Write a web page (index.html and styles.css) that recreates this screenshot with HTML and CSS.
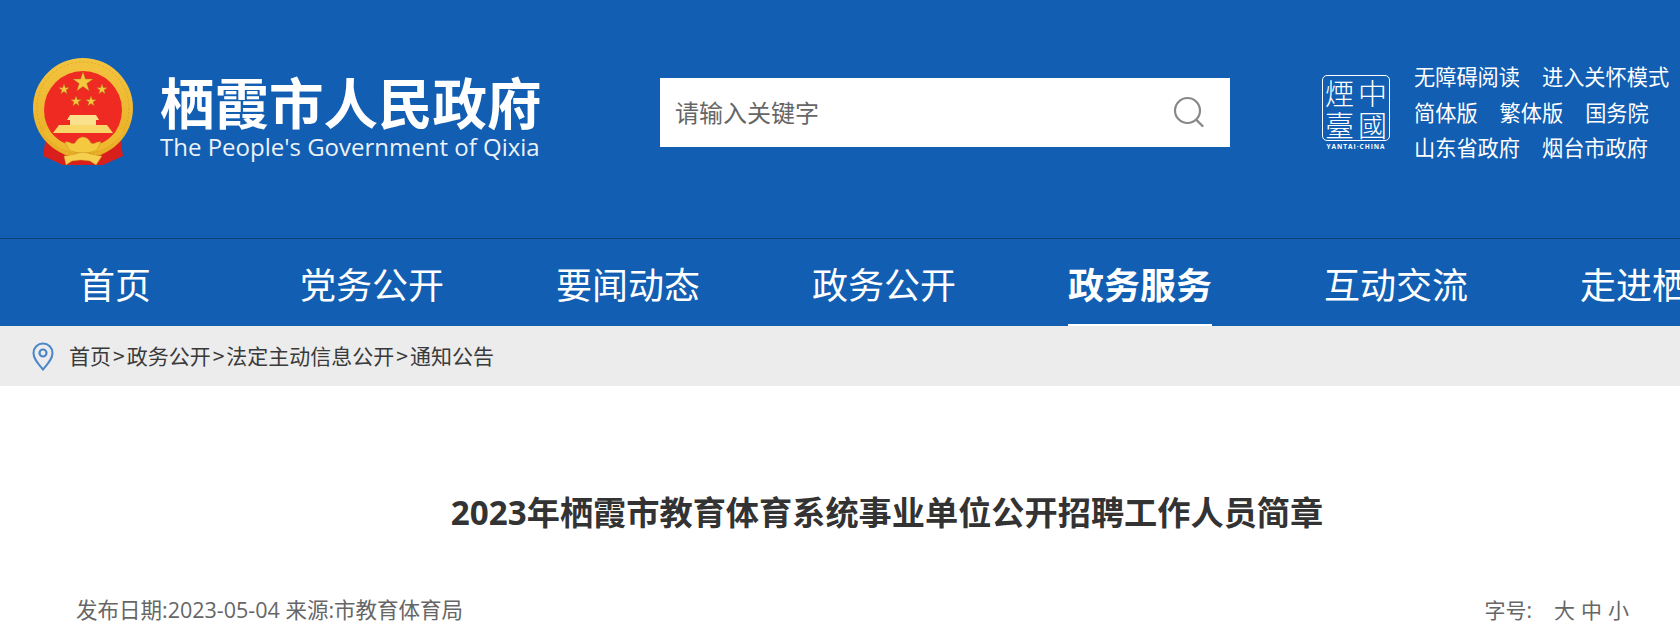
FILE: index.html
```html
<!DOCTYPE html>
<html lang="zh-CN">
<head>
<meta charset="utf-8">
<title>2023年栖霞市教育体育系统事业单位公开招聘工作人员简章</title>
<link rel="stylesheet" href="styles.css">
</head>
<body>
<header class="top">
  <a class="brand" href="#">
    <svg class="emblem" viewBox="0 0 102 108" aria-hidden="true">
      <defs>
        <linearGradient id="gold" x1="0" y1="0" x2="0" y2="1"><stop offset="0" stop-color="#f3c440"/><stop offset="1" stop-color="#e8ad24"/></linearGradient>
      </defs>
      <path d="M14 79L11 98l20 9 6-16z" fill="#d91f1c"/>
      <path d="M88 79l3 19-20 9-6-16z" fill="#d91f1c"/>
      <circle cx="51" cy="50" r="50" fill="url(#gold)"/>
      <circle cx="51" cy="50" r="46" fill="none" stroke="#d49a22" stroke-width="1" stroke-dasharray="2 2" opacity=".6"/>
      <circle cx="51" cy="52" r="39" fill="#ee2a22"/>
      <g fill="#f5c93f" stroke="#a8801c" stroke-width=".4">
        <polygon points="51,14 53.400,21.100 60.900,21.100 54.800,25.600 57.100,32.800 51,28.400 44.900,32.800 47.200,25.600 41.100,21.100 48.600,21.100"/>
        <polygon points="32,26 33.300,29.700 37.200,29.700 34,32.100 35.200,35.800 32,33.500 28.800,35.800 30,32.100 26.800,29.700 30.700,29.700"/>
        <polygon points="70,26 71.300,29.700 75.200,29.700 72,32.100 73.200,35.800 70,33.500 66.800,35.800 68,32.100 64.800,29.700 68.700,29.700"/>
        <polygon points="44,38 45.300,41.700 49.200,41.700 46,44.100 47.200,47.800 44,45.500 40.800,47.800 42,44.100 38.800,41.700 42.700,41.700"/>
        <polygon points="59,38 60.300,41.700 64.200,41.700 61,44.100 62.200,47.800 59,45.500 55.800,47.800 57,44.100 53.800,41.700 57.700,41.700"/>
      </g>
      <path d="M38 57h26l3 5h-3v5H38v-5h-3z" fill="#fbe08e"/>
      <path d="M27 67h48l6 8H21z" fill="#f8d768"/>
      <path d="M13 72c9 13 22 20 38 20s29-7 38-20" fill="none" stroke="#efb92f" stroke-width="6"/>
      <path d="M30 97h42v10H30z" fill="#d91f1c"/>
      <path d="M33 84c5-1 6 3 10 1 2-4 5-6 8-6s6 2 8 6c4 2 5-2 10-1l-4 8c-8 4-20 4-28 0z" fill="#f5c93f" stroke="#c38f1c" stroke-width=".5"/>
      <path d="M32 98l12-2c3-2 11-2 14 0l12 2-6 9-6-4-9-1-9 1-6 4z" fill="#f6cf4e" stroke="#c38f1c" stroke-width=".4"/>
    </svg>
    <span class="brand-text">
      <span class="brand-cn">栖霞市人民政府</span>
      <span class="brand-en">The People's Government of Qixia</span>
    </span>
  </a>
  <form class="search">
    <span class="search-hint">请输入关键字</span>
    <svg class="search-icon" viewBox="0 0 32 32" aria-hidden="true">
      <circle cx="14.500" cy="14.500" r="12.500" fill="none" stroke="#888" stroke-width="2.200"/>
      <path d="M23.500 24l6 6" stroke="#888" stroke-width="2.400" fill="none" stroke-linecap="round"/>
    </svg>
  </form>
  <div class="stamp">
    <div class="stamp-box">
      <span>煙</span><span>中</span><span>臺</span><span>國</span>
    </div>
    <div class="stamp-cap">YANTAI·CHINA</div>
  </div>
  <div class="links">
    <div class="links-row"><a href="#">无障碍阅读</a><a href="#">进入关怀模式</a></div>
    <div class="links-row"><a href="#">简体版</a><a href="#">繁体版</a><a href="#">国务院</a></div>
    <div class="links-row"><a href="#">山东省政府</a><a href="#">烟台市政府</a></div>
  </div>
</header>
<nav class="nav">
  <a class="nav-item nav-first" href="#">首页</a>
  <a class="nav-item" href="#">党务公开</a>
  <a class="nav-item" href="#">要闻动态</a>
  <a class="nav-item" href="#">政务公开</a>
  <a class="nav-item nav-active" href="#">政务服务</a>
  <a class="nav-item" href="#">互动交流</a>
  <a class="nav-item" href="#">走进栖霞</a>
</nav>
<div class="crumbs">
  <svg class="pin" viewBox="0 0 22 29" aria-hidden="true">
    <path d="M11 27.500C6 21.500 1.500 17 1.500 11a9.500 9.500 0 0 1 19 0c0 6-4.500 10.500-9.500 16.500z" fill="none" stroke="#4a86c8" stroke-width="2"/>
    <circle cx="11" cy="11" r="3.500" fill="none" stroke="#4a86c8" stroke-width="2.200"/>
  </svg>
  <span class="crumb-text"><a href="#">首页</a><span class="sep">&gt;</span><a href="#">政务公开</a><span class="sep">&gt;</span><a href="#">法定主动信息公开</a><span class="sep">&gt;</span><a href="#">通知公告</a></span>
</div>
<main class="article">
  <h1 class="title">2023年栖霞市教育体育系统事业单位公开招聘工作人员简章</h1>
  <div class="meta">
    <span class="meta-left">发布日期:2023-05-04 来源:市教育体育局</span>
    <span class="meta-right"><span class="size-label">字号:</span><a href="#">大</a><a href="#">中</a><a href="#">小</a></span>
  </div>
</main>
</body>
</html>
```

FILE: styles.css
```css
* { box-sizing: border-box; }
html, body { margin: 0; padding: 0; height: 635px; overflow: hidden; background: #fff; }
body { font-family: "Noto Sans CJK SC", "Liberation Sans", sans-serif; }
a { color: inherit; text-decoration: none; }

.top {
  height: 239px;
  background: #115eb2;
  border-bottom: 1px solid #0c3f75;
  display: flex;
  align-items: flex-start;
  padding: 58px 0 0 32px;
  color: #fff;
}
.brand { display: flex; width: 628px; flex: none; }
.emblem { width: 102px; height: 108px; flex: none; }
.brand-text { display: flex; flex-direction: column; margin-left: 26px; padding-top: 11px; width: 400px; }
.brand-cn { font-size: 54.500px; font-weight: 700; line-height: 64px; white-space: nowrap; }
.brand-en { font-family: "Open Sans", sans-serif; font-size: 24px; line-height: 24px; margin-top: 2px; white-space: nowrap; opacity: .92; }

.search {
  width: 570px;
  height: 69px;
  margin-top: 20px;
  flex: none;
  background: #fff;
  display: flex;
  align-items: center;
  justify-content: space-between;
  padding: 0 25px 0 15px;
}
.search-hint { font-size: 24px; line-height: 34px; margin-top: -2px; color: #666; }
.search-icon { width: 32px; height: 32px; margin-top: -2px; }

.stamp { margin: 17px 0 0 92px; width: 68px; flex: none; }
.stamp-box {
  width: 68px;
  height: 66px;
  border: 1.500px solid #fff;
  border-radius: 5px;
  display: grid;
  grid-template-columns: 1fr 1fr;
  grid-template-rows: 1fr 1fr;
  place-items: center;
  font-family: "Noto Sans CJK TC", sans-serif;
  font-size: 29px;
  font-weight: 300;
  line-height: 1;
}
.stamp-cap { font-family: "Open Sans", sans-serif; font-size: 6.500px; font-weight: 700; letter-spacing: 1px; line-height: 12px; text-align: center; white-space: nowrap; }

.links { margin: 0 0 0 24px; font-size: 21.200px; line-height: 35.500px; white-space: nowrap; }
.links-row { display: flex; gap: 22px; }

.nav {
  height: 87px;
  background: #115eb2;
  display: flex;
  padding-left: 79px;
  overflow: hidden;
  white-space: nowrap;
}
.nav-item {
  flex: none;
  font-size: 36px;
  color: #fff;
  line-height: 89px;
  height: 87px;
  margin-right: 112px;
}
.nav-first { margin-right: 149px; }
.nav-active { font-weight: 700; border-bottom: 2px solid #fff; }

.crumbs {
  height: 60px;
  background: #ececec;
  display: flex;
  align-items: center;
  padding-left: 32px;
  color: #3a3a3a;
  font-size: 21px;
}
.pin { width: 22px; height: 29px; flex: none; }
.crumb-text { margin-left: 15px; line-height: 30px; margin-top: -2px; }
.sep { margin: 0 2px; }

.article { padding: 0 51px 0 76px; }
.title {
  margin: 99px 0 0;
  font-family: "Open Sans", "Noto Sans CJK SC", sans-serif;
  font-size: 33.200px;
  font-weight: 700;
  line-height: 56px;
  color: #333;
  text-align: center;
  padding-left: 69px;
}
.meta {
  margin-top: 49px;
  display: flex;
  justify-content: space-between;
  font-family: "Open Sans", "Noto Sans CJK SC", sans-serif;
  font-size: 21.500px;
  line-height: 40px;
  color: #666;
}
.meta-right { font-size: 21px; }
.meta-right a { margin-left: 6px; }
.size-label { margin-right: 16px; }
```
